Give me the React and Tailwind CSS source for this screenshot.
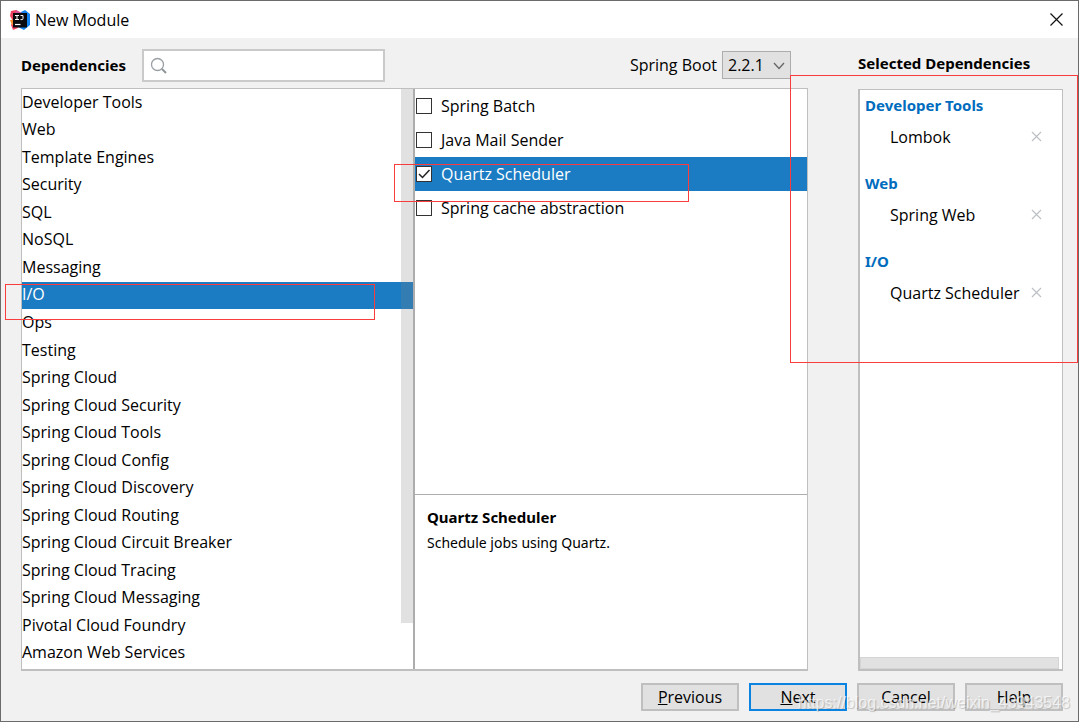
import React, { useState } from 'react';

const CATEGORIES = [
    'Developer Tools', 'Web', 'Template Engines', 'Security', 'SQL', 'NoSQL', 'Messaging',
    'I/O', 'Ops', 'Testing', 'Spring Cloud', 'Spring Cloud Security', 'Spring Cloud Tools',
    'Spring Cloud Config', 'Spring Cloud Discovery', 'Spring Cloud Routing',
    'Spring Cloud Circuit Breaker', 'Spring Cloud Tracing', 'Spring Cloud Messaging',
    'Pivotal Cloud Foundry', 'Amazon Web Services'
];

const IO_DEPENDENCIES = ['Spring Batch', 'Java Mail Sender', 'Quartz Scheduler', 'Spring cache abstraction'];

const SELECTED = [
    { group: 'Developer Tools', name: 'Lombok' },
    { group: 'Web', name: 'Spring Web' },
    { group: 'I/O', name: 'Quartz Scheduler' }
];

const IdeaLogo = () => (
    <svg className="w-5 h-5" viewBox="0 0 20 20" aria-hidden="true">
        <path d="M1 1 L6 0 L11 3 L8 18 L3 20 L1 15 L3 11 L0 6 Z" fill="#f0405f" />
        <path d="M0 10 L6 9 L6 16 L2 15 Z" fill="#fb8b2c" />
        <path d="M11 2 L15 0 L20 4 L20 15 L14 20 L8 17 Z" fill="#1283f0" />
        <path d="M6 0 L12 3 L10 5 L5 4 Z" fill="#d5509a" />
        <rect x="3" y="3" width="14" height="14.5" fill="#0b0b0f" />
        <path d="M5 5.5 H9 M7 5.5 V9.5 M5 9.5 H9" fill="none" stroke="#fff" strokeWidth="1" />
        <path d="M10.5 5.5 H13 V8.5 Q13 9.6 12 9.6 H10.5" fill="none" stroke="#fff" strokeWidth="1" />
        <path d="M5 14.5 H10.5" stroke="#fff" strokeWidth="1.2" />
    </svg>
);

// Red frame drawn over the area it points at
const Highlight = ({ className }) => (
    <div className={`absolute z-10 border border-[#fa3c3c] pointer-events-none ${className}`} />
);

const CategoryList = ({ active, onSelect }) => (
    <div className="relative flex-1 min-w-0 flex flex-col bg-white pb-[2px]">
        <ul className="flex-1 flex flex-col">
            {CATEGORIES.map((category) => (
                <li key={category} className="relative flex-1 flex">
                    <button
                        onClick={() => onSelect(category)}
                        className={`flex-1 pb-[2px] text-left leading-6 ${category === active ? 'bg-[#1c7cc3] text-white' : ''}`}
                    >
                        {category}
                    </button>
                    {category === 'I/O' && <Highlight className="-left-[17px] right-[38px] top-[2px] h-9" />}
                </li>
            ))}
        </ul>
        <div className="absolute right-0 top-0 bottom-[46px] w-3 bg-[#808080]/24" />
    </div>
);

const DependencyRow = ({ name, checked, current, onToggle }) => (
    <li className={`relative h-[34px] flex ${current ? 'bg-[#1c7cc3] text-white' : ''}`}>
        <label className="flex-1 flex items-center gap-[9px] pl-px">
            <span className="relative w-4 h-4 flex">
                <input
                    type="checkbox"
                    checked={checked}
                    onChange={onToggle}
                    className="appearance-none w-4 h-4 bg-white border border-[#333]"
                />
                {checked && (
                    <svg className="absolute inset-0 w-4 h-4 pointer-events-none" viewBox="0 0 16 16">
                        <path d="M3 8 L6.5 11.5 L13.5 4" fill="none" stroke="#222" strokeWidth="1.5" />
                    </svg>
                )}
            </span>
            {name}
        </label>
        {name === 'Quartz Scheduler' && <Highlight className="-left-[21px] right-[118px] top-[7px] h-[38px]" />}
    </li>
);

const SelectedGroup = ({ group, name }) => (
    <section>
        <h3 className="h-[31px] leading-[31px] text-[15px] font-bold font-['Noto_Sans',sans-serif] text-[#006cbe]">{group}</h3>
        <div className="h-[31px] pl-[25px] pr-5 flex items-center justify-between">
            <span className="whitespace-nowrap">{name}</span>
            <button aria-label={`Remove ${name}`}>
                <svg className="w-[11px] h-[11px]" viewBox="0 0 11 11">
                    <path d="M1 1 L10 10 M10 1 L1 10" stroke="#bdc1c5" strokeWidth="1.2" />
                </svg>
            </button>
        </div>
    </section>
);

const FooterButton = ({ primary, children }) => (
    <button
        className={`w-[98px] h-7 pb-px leading-5 bg-[#e1e1e1] border-2 ${primary ? 'border-[#0a84e0]' : 'border-[#bfbfbf]'}`}
    >
        {children}
    </button>
);

const App = () => {
    const [category, setCategory] = useState('I/O');
    const [search, setSearch] = useState('');
    const [version, setVersion] = useState('2.2.1');
    const [checked, setChecked] = useState(['Quartz Scheduler']);

    const toggle = (name) => {
        setChecked(checked.includes(name) ? checked.filter(c => c !== name) : [...checked, name]);
    };

    return (
        <div className="relative min-h-screen flex flex-col bg-[#f1f1f1] border border-[#6b6b6b] text-black text-base font-['Open_Sans',sans-serif]">
            {/* Title bar */}
            <header className="h-[37px] pl-[9px] pr-[15px] flex items-center justify-between bg-white">
                <div className="flex items-center gap-[5px]">
                    <IdeaLogo />
                    <h1>New Module</h1>
                </div>
                <button aria-label="Close">
                    <svg className="w-[13px] h-[13px]" viewBox="0 0 13 13">
                        <path d="M0.5 0.5 L12.5 12.5 M12.5 0.5 L0.5 12.5" stroke="#111" strokeWidth="1.2" />
                    </svg>
                </button>
            </header>

            <main className="flex-1 flex gap-[50px] pl-5 pr-[15px]">
                <div className="flex-1 min-w-0 flex flex-col">
                    <div className="h-[50px] pt-1 pr-[17px] flex items-center">
                        <label htmlFor="search" className="w-[121px] text-[15px] font-bold font-['Noto_Sans',sans-serif]">Dependencies</label>
                        <div className="relative">
                            <input
                                id="search"
                                type="text"
                                value={search}
                                onChange={(e) => setSearch(e.target.value)}
                                className="block w-[243px] h-[33px] pl-8 bg-white border-2 border-[#cacaca] outline-none"
                            />
                            <svg className="absolute left-2 top-2 w-[18px] h-[18px] pointer-events-none" viewBox="0 0 18 18">
                                <circle cx="7.5" cy="7.5" r="6" fill="none" stroke="#9aa0a5" strokeWidth="1.3" />
                                <path d="M12 12 L16 16" stroke="#8f9599" strokeWidth="2" />
                            </svg>
                        </div>
                        <label htmlFor="version" className="ml-auto mr-[5px]">Spring Boot</label>
                        <div className="relative">
                            <select
                                id="version"
                                value={version}
                                onChange={(e) => setVersion(e.target.value)}
                                className="block appearance-none w-[69px] h-7 pl-[5px] bg-[#e1e1e1] border border-[#adadad] outline-none"
                            >
                                <option>2.2.1</option>
                            </select>
                            <svg className="absolute right-[6px] top-[11px] w-3 h-2 pointer-events-none" viewBox="0 0 12 8">
                                <path d="M1 1 L6 6.5 L11 1" fill="none" stroke="#666" strokeWidth="1.3" />
                            </svg>
                        </div>
                    </div>

                    <div className="flex-1 flex border border-b-2 border-[#bfbfbf]">
                        <CategoryList active={category} onSelect={setCategory} />
                        <div className="w-[394px] flex flex-col bg-white border-l-2 border-[#adadad]">
                            <ul className="flex-1">
                                {IO_DEPENDENCIES.map((name) => (
                                    <DependencyRow
                                        key={name}
                                        name={name}
                                        checked={checked.includes(name)}
                                        current={name === 'Quartz Scheduler'}
                                        onToggle={() => toggle(name)}
                                    />
                                ))}
                            </ul>
                            <div className="h-[175px] px-3 pt-2 border-t border-[#adadad]">
                                <h2 className="leading-7 text-[15px] font-bold font-['Noto_Sans',sans-serif]">Quartz Scheduler</h2>
                                <p className="leading-6 text-sm font-['Noto_Sans',sans-serif]">Schedule jobs using Quartz.</p>
                            </div>
                        </div>
                    </div>
                </div>

                {/* Selected dependencies */}
                <aside className="relative w-[205px] flex flex-col">
                    <h2 className="h-[51px] leading-[50px] text-[15px] font-bold font-['Noto_Sans',sans-serif] whitespace-nowrap">Selected Dependencies</h2>
                    <div className="flex-1 flex flex-col bg-white border border-l-2 border-b-2 border-[#bfbfbf]">
                        <div className="flex-1 flex flex-col gap-4 pl-[5px]">
                            {SELECTED.map((item) => (
                                <SelectedGroup key={item.group} group={item.group} name={item.name} />
                            ))}
                        </div>
                        <div className="h-3 mr-[3px] bg-[#e1e1e1] border border-[#d5d5d5]" />
                    </div>
                    <Highlight className="-left-[68px] -right-[15px] top-[37px] h-72" />
                </aside>
            </main>

            <footer className="h-[50px] pt-3 pr-[15px] flex justify-end gap-[10px]">
                <FooterButton><u>P</u>revious</FooterButton>
                <FooterButton primary><u>N</u>ext</FooterButton>
                <FooterButton>Cancel</FooterButton>
                <FooterButton>Help</FooterButton>
            </footer>

            <p className="absolute right-2 bottom-2 leading-5 text-base text-white/70 text-shadow-[1px_1px_1px_rgb(0_0_0/0.2)] font-['Liberation_Sans',sans-serif] pointer-events-none">
                https://blog.csdn.net/weixin_43943548
            </p>
        </div>
    );
};

export default App;
